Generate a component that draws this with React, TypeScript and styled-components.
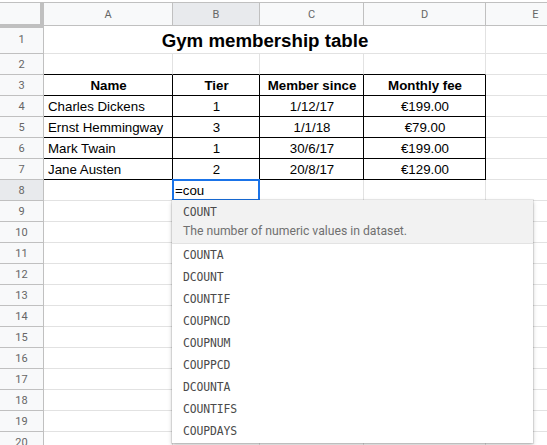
import { createGlobalStyle } from 'styled-components';
import styled from 'styled-components';

const GlobalStyle = createGlobalStyle`
  html, body {
    margin: 0;
    padding: 0;
    background: #fff;
    overflow: hidden;
  }
  body {
    font-family: 'Liberation Sans', Arial, sans-serif;
  }
`;

const Page = styled.div`
  padding-top: 2px;
  height: 443px;
  overflow: hidden;
`;

const Sheet = styled.div`
  display: grid;
  grid-template-columns: 44px 129px 87px 104px 122px 100px;
  grid-template-rows: 23px 28px;
  grid-auto-rows: 21px;
  border-top: 1px solid #c0c0c0;
`;

const Corner = styled.div`
  background: #f8f9fa;
  border-right: 4px solid #c0c0c0;
  border-bottom: 4px solid #c0c0c0;
  margin-bottom: -2px;
  position: relative;
  z-index: 2;
`;

const ColHead = styled.div<{ $active?: boolean }>`
  display: flex;
  align-items: center;
  justify-content: center;
  background: ${(p) => (p.$active ? '#e8eaed' : '#f8f9fa')};
  border-right: 1px solid #c0c0c0;
  border-bottom: 1px solid #c0c0c0;
  font-family: Roboto, 'Liberation Sans', sans-serif;
  font-size: 11px;
  color: #666;
`;

const RowHead = styled.div<{ $active?: boolean }>`
  display: flex;
  align-items: center;
  justify-content: center;
  background: ${(p) => (p.$active ? '#e8eaed' : '#f8f9fa')};
  border-right: 1px solid #c0c0c0;
  border-bottom: 1px solid #c0c0c0;
  font-family: Roboto, 'Liberation Sans', sans-serif;
  font-size: 11px;
  color: #666;
`;

const Cell = styled.div<{
  $align?: 'left' | 'center';
  $bold?: boolean;
  $right?: boolean;
  $bottom?: boolean;
}>`
  display: flex;
  align-items: center;
  justify-content: ${(p) => (p.$align === 'center' ? 'center' : 'flex-start')};
  padding: 1px 3px 0 4px;
  border-right: 1px solid ${(p) => (p.$right ? '#000' : '#e2e2e2')};
  border-bottom: 1px solid ${(p) => (p.$bottom ? '#000' : '#e2e2e2')};
  font-size: 13.3px;
  font-weight: ${(p) => (p.$bold ? 700 : 400)};
  color: #000;
  white-space: nowrap;
  overflow: hidden;
  min-width: 0;
`;

const Title = styled(Cell)`
  grid-column: span 4;
  justify-content: center;
  font-size: 18.7px;
  padding-top: 3px;
`;

const EditCell = styled(Cell)`
  position: relative;
  overflow: visible;
  padding-left: 3px;
  outline: 2px solid #1a73e8;
  outline-offset: -2px;
  z-index: 3;
  margin-left: -1px;
  margin-top: -1px;
`;

const Suggest = styled.div`
  position: absolute;
  top: 100%;
  left: 0;
  width: 361px;
  background: #fff;
  box-shadow: 0 2px 4px rgba(0, 0, 0, 0.25), 0 0 0 1px rgba(0, 0, 0, 0.08);
  padding-bottom: 1px;
  z-index: 4;
`;

const Highlight = styled.div`
  background: #f2f2f2;
  border-bottom: 1px solid #e3e3e3;
  padding: 3px 11px 2px;
`;

const FnName = styled.div`
  font-family: 'DejaVu Sans Mono', 'Liberation Mono', monospace;
  font-size: 11.4px;
  letter-spacing: -0.1px;
  color: #4a4a4a;
  line-height: 18px;
`;

const FnDesc = styled.div`
  font-family: Roboto, 'Liberation Sans', sans-serif;
  font-size: 12.2px;
  color: #707070;
  line-height: 20px;
`;

const Item = styled.div`
  height: 22px;
  display: flex;
  align-items: center;
  padding: 0 11px;
`;

const columns = ['A', 'B', 'C', 'D', 'E'];

const table = [
  ['Name', 'Tier', 'Member since', 'Monthly fee'],
  ['Charles Dickens', '1', '1/12/17', '€199.00'],
  ['Ernst Hemmingway', '3', '1/1/18', '€79.00'],
  ['Mark Twain', '1', '30/6/17', '€199.00'],
  ['Jane Austen', '2', '20/8/17', '€129.00'],
];

const suggestions = [
  'COUNTA',
  'DCOUNT',
  'COUNTIF',
  'COUPNCD',
  'COUPNUM',
  'COUPPCD',
  'DCOUNTA',
  'COUNTIFS',
  'COUPDAYS',
];

const App = () => {
  const rows = [];
  for (let r = 1; r <= 20; r++) {
    const cells = [];
    if (r === 1) {
      cells.push(<Title key='t' $bold>Gym membership table</Title>);
      cells.push(<Cell key='e' />);
    } else {
      for (let c = 0; c < 5; c++) {
        const inTable = r >= 3 && r <= 7 && c < 4;
        const aboveTable = r === 2 && c < 4;
        const text = inTable ? table[r - 3][c] : '';
        if (r === 8 && c === 1) {
          cells.push(
            <EditCell key={c}>
              =cou
              <Suggest>
                <Highlight>
                  <FnName>COUNT</FnName>
                  <FnDesc>The number of numeric values in dataset.</FnDesc>
                </Highlight>
                {suggestions.map((s) => (
                  <Item key={s}>
                    <FnName>{s}</FnName>
                  </Item>
                ))}
              </Suggest>
            </EditCell>
          );
          continue;
        }
        cells.push(
          <Cell
            key={c}
            $align={c === 0 && r !== 3 ? 'left' : 'center'}
            $bold={r === 3}
            $right={inTable}
            $bottom={inTable || aboveTable}
          >
            {text}
          </Cell>
        );
      }
    }
    rows.push(
      <RowHead key={'h' + r} $active={r === 8}>
        {r}
      </RowHead>,
      ...cells
    );
  }

  return (
    <Page>
      <GlobalStyle />
      <Sheet>
        <Corner />
        {columns.map((c) => (
          <ColHead key={c} $active={c === 'B'}>
            {c}
          </ColHead>
        ))}
        {rows}
      </Sheet>
    </Page>
  );
};

export default App;
